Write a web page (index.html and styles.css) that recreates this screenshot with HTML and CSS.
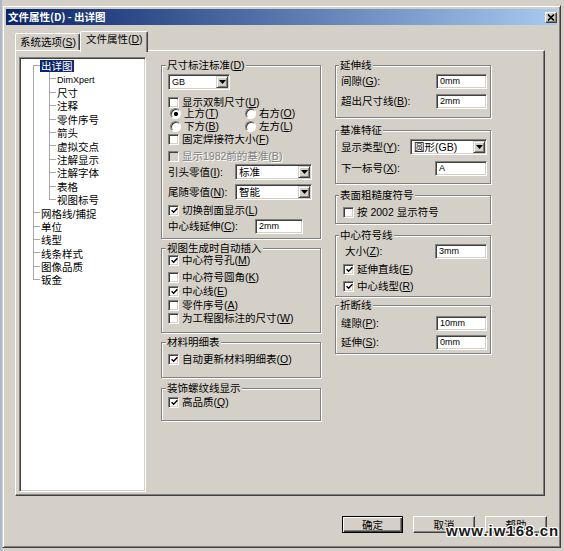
FILE: index.html
```html
<!DOCTYPE html>
<html lang="zh-CN">
<head>
<meta charset="utf-8">
<title>文件属性 - 出详图</title>
<link rel="stylesheet" href="styles.css">
</head>
<body>
<div class="screen">
 <div class="dialog">
  <div class="titlebar">
   <span class="title">文件属性(D) - 出详图</span>
   <span class="close"><svg width="8" height="7" viewBox="0 0 8 7"><path d="M1 0.5 L7 6.5 M7 0.5 L1 6.5" stroke="#000" stroke-width="1.7"/></svg></span>
  </div>
  <div class="body">
   <div class="tabs">
    <div class="tab">系统选项(<u>S</u>)</div>
    <div class="tab active">文件属性(<u>D</u>)</div>
   </div>
   <div class="panel">
    <div class="tree">
     <ul class="lvl0">
      <li><div class="node"><span class="lbl sel">出详图</span></div>
       <ul class="lvl1">
        <li><div class="node"><span class="lbl latin">DimXpert</span></div></li>
        <li><div class="node"><span class="lbl">尺寸</span></div></li>
        <li><div class="node"><span class="lbl">注释</span></div></li>
        <li><div class="node"><span class="lbl">零件序号</span></div></li>
        <li><div class="node"><span class="lbl">箭头</span></div></li>
        <li><div class="node"><span class="lbl">虚拟交点</span></div></li>
        <li><div class="node"><span class="lbl">注解显示</span></div></li>
        <li><div class="node"><span class="lbl">注解字体</span></div></li>
        <li><div class="node"><span class="lbl">表格</span></div></li>
        <li><div class="node"><span class="lbl">视图标号</span></div></li>
       </ul>
      </li>
      <li><div class="node"><span class="lbl">网格线/捕捉</span></div></li>
      <li><div class="node"><span class="lbl">单位</span></div></li>
      <li><div class="node"><span class="lbl">线型</span></div></li>
      <li><div class="node"><span class="lbl">线条样式</span></div></li>
      <li><div class="node"><span class="lbl">图像品质</span></div></li>
      <li><div class="node"><span class="lbl">钣金</span></div></li>
     </ul>
    </div>

    <div class="col mid">
     <fieldset class="grp g-dim">
      <legend>尺寸标注标准(<u>D</u>)</legend>
      <div class="rows">
       <div class="row"><span class="select w62"><span class="val latin">GB</span><span class="dd"><svg width="7" height="4" viewBox="0 0 7 4"><path d="M0 0H7L3.5 4Z"/></svg></span></span></div>
       <div class="row"><span class="cb"></span><span>显示双制尺寸(<u>U</u>)</span></div>
       <div class="row radios"><span class="ropt"><span class="rb on"></span>上方(<u>T</u>)</span><span class="ropt"><span class="rb"></span>右方(<u>O</u>)</span></div>
       <div class="row radios"><span class="ropt"><span class="rb"></span>下方(<u>B</u>)</span><span class="ropt"><span class="rb"></span>左方(<u>L</u>)</span></div>
       <div class="row"><span class="cb"></span><span>固定焊接符大小(<u>F</u>)</span></div>
       <div class="row"><span class="cb dis"></span><span class="dis-text">显示1982前的基准(<u>B</u>)</span></div>
       <div class="row"><span>引头零值(<u>I</u>):</span><span class="select w77 push m5"><span class="val">标准</span><span class="dd"><svg width="7" height="4" viewBox="0 0 7 4"><path d="M0 0H7L3.5 4Z"/></svg></span></span></div>
       <div class="row"><span>尾随零值(<u>N</u>):</span><span class="select w77 push m5"><span class="val">智能</span><span class="dd"><svg width="7" height="4" viewBox="0 0 7 4"><path d="M0 0H7L3.5 4Z"/></svg></span></span></div>
       <div class="row"><span class="cb on"><svg width="7" height="7" viewBox="0 0 7 7"><path d="M0.6 3.2 L2.6 5.2 L6.4 1.2" fill="none" stroke="#000" stroke-width="1.5"/></svg></span><span>切换剖面显示(<u>L</u>)</span></div>
       <div class="row"><span>中心线延伸(<u>C</u>):</span><span class="input w48 push m14">2mm</span></div>
      </div>
     </fieldset>

     <fieldset class="grp g-auto">
      <legend>视图生成时自动插入</legend>
      <div class="rows">
       <div class="row"><span class="cb on"><svg width="7" height="7" viewBox="0 0 7 7"><path d="M0.6 3.2 L2.6 5.2 L6.4 1.2" fill="none" stroke="#000" stroke-width="1.5"/></svg></span><span>中心符号孔(<u>M</u>)</span></div>
       <div class="row"><span class="cb"></span><span>中心符号圆角(<u>K</u>)</span></div>
       <div class="row"><span class="cb on"><svg width="7" height="7" viewBox="0 0 7 7"><path d="M0.6 3.2 L2.6 5.2 L6.4 1.2" fill="none" stroke="#000" stroke-width="1.5"/></svg></span><span>中心线(<u>E</u>)</span></div>
       <div class="row"><span class="cb"></span><span>零件序号(<u>A</u>)</span></div>
       <div class="row"><span class="cb"></span><span>为工程图标注的尺寸(<u>W</u>)</span></div>
      </div>
     </fieldset>

     <fieldset class="grp g-bom">
      <legend>材料明细表</legend>
      <div class="rows">
       <div class="row"><span class="cb on"><svg width="7" height="7" viewBox="0 0 7 7"><path d="M0.6 3.2 L2.6 5.2 L6.4 1.2" fill="none" stroke="#000" stroke-width="1.5"/></svg></span><span>自动更新材料明细表(<u>O</u>)</span></div>
      </div>
     </fieldset>

     <fieldset class="grp g-thread">
      <legend>装饰螺纹线显示</legend>
      <div class="rows">
       <div class="row"><span class="cb on"><svg width="7" height="7" viewBox="0 0 7 7"><path d="M0.6 3.2 L2.6 5.2 L6.4 1.2" fill="none" stroke="#000" stroke-width="1.5"/></svg></span><span>高品质(<u>Q</u>)</span></div>
      </div>
     </fieldset>
    </div>

    <div class="col right">
     <fieldset class="grp g-ext">
      <legend>延伸线</legend>
      <div class="rows">
       <div class="row"><span>间隙(<u>G</u>):</span><span class="input w51 push">0mm</span></div>
       <div class="row"><span>超出尺寸线(<u>B</u>):</span><span class="input w51 push">2mm</span></div>
      </div>
     </fieldset>

     <fieldset class="grp g-datum">
      <legend>基准特征</legend>
      <div class="rows">
       <div class="row"><span>显示类型(<u>Y</u>):</span><span class="select w77 push"><span class="val">圆形(GB)</span><span class="dd"><svg width="7" height="4" viewBox="0 0 7 4"><path d="M0 0H7L3.5 4Z"/></svg></span></span></div>
       <div class="row"><span>下一标号(<u>X</u>):</span><span class="input w52 push">A</span></div>
      </div>
     </fieldset>

     <fieldset class="grp g-rough">
      <legend>表面粗糙度符号</legend>
      <div class="rows">
       <div class="row ind2"><span class="cb"></span><span>按 2002 显示符号</span></div>
      </div>
     </fieldset>

     <fieldset class="grp g-center">
      <legend>中心符号线</legend>
      <div class="rows">
       <div class="row"><span class="ind4">大小(<u>Z</u>):</span><span class="input w52 push">3mm</span></div>
       <div class="row ind2"><span class="cb on"><svg width="7" height="7" viewBox="0 0 7 7"><path d="M0.6 3.2 L2.6 5.2 L6.4 1.2" fill="none" stroke="#000" stroke-width="1.5"/></svg></span><span>延伸直线(<u>E</u>)</span></div>
       <div class="row ind2"><span class="cb on"><svg width="7" height="7" viewBox="0 0 7 7"><path d="M0.6 3.2 L2.6 5.2 L6.4 1.2" fill="none" stroke="#000" stroke-width="1.5"/></svg></span><span>中心线型(<u>R</u>)</span></div>
      </div>
     </fieldset>

     <fieldset class="grp g-break">
      <legend>折断线</legend>
      <div class="rows">
       <div class="row"><span>缝隙(<u>P</u>):</span><span class="input w51 push">10mm</span></div>
       <div class="row"><span>延伸(<u>S</u>):</span><span class="input w51 push">0mm</span></div>
      </div>
     </fieldset>
    </div>
   </div>

   <div class="buttons">
    <span class="btn default">确定</span>
    <span class="btn">取消</span>
    <span class="btn">帮助</span>
   </div>
  </div>
 </div>
 <div class="watermark">www.iw168.cn</div>
</div>
</body>
</html>
```
FILE: styles.css
```css
* { box-sizing: border-box; }
html, body { margin: 0; padding: 0; }
body {
  font-family: "Liberation Sans", "Noto Sans CJK SC", sans-serif;
  font-size: 10.5px;
  color: #000;
  background: #d4d0c8;
}
u { text-underline-offset: 1px; }

.screen {
  position: relative;
  width: 564px;
  height: 551px;
  overflow: hidden;
  padding: 5px 0 0 2px;
  background: linear-gradient(to right, #aeb7c8 0, #aeb7c8 2px, #d4d0c8 2px);
}

.dialog {
  width: 559px;
  height: 543px;
  background: #d4d0c8;
  border: 1px solid;
  border-color: #d4d0c8 #404040 #404040 #d4d0c8;
  box-shadow: inset 1px 1px 0 #fff, inset -1px -1px 0 #808080;
  padding: 3px;
}

.titlebar {
  height: 16px;
  display: flex;
  align-items: center;
  justify-content: space-between;
  background: linear-gradient(to right, #0a246a 0%, #a6caf0 100%);
  padding-left: 2px;
}
.title {
  color: #fff;
  font-weight: bold;
  line-height: 14px;
  font-family: "Noto Sans CJK SC", sans-serif;
}
.close {
  width: 12px;
  height: 11px;
  background: #d4d0c8;
  border: 1px solid;
  border-color: #fff #404040 #404040 #fff;
  box-shadow: inset -1px -1px 0 #808080;
  display: flex;
  align-items: center;
  justify-content: center;
}

.body { padding: 6px 12px 0 9px; }

.tabs {
  display: flex;
  align-items: flex-end;
  height: 19px;
}
.tab {
  width: 65px;
  height: 17px;
  padding: 2px 0 0 4px;
  line-height: 13px;
  border: 1px solid;
  border-bottom: none;
  border-color: #fff #404040 transparent #fff;
  box-shadow: inset -1px 0 0 #808080;
  border-radius: 2px 2px 0 0;
  white-space: nowrap;
}
.tab.active {
  width: 68px;
  height: 21px;
  margin-bottom: -2px;
  padding: 1px 0 0 5px;
  position: relative;
  z-index: 1;
  background: #d4d0c8;
}

.panel {
  display: flex;
  align-items: flex-start;
  width: 530px;
  height: 446px;
  border: 1px solid;
  border-color: #fff #404040 #404040 #fff;
  box-shadow: inset -1px -1px 0 #808080;
  padding: 6px 0 0 3px;
}

/* tree */
.tree {
  width: 127px;
  height: 435px;
  flex: none;
  background: #fff;
  border: 1px solid;
  border-color: #808080 #fff #fff #808080;
  box-shadow: inset 1px 1px 0 #404040, inset -1px -1px 0 #d4d0c8;
  padding: 1px 0 0 1px;
}
.tree ul { list-style: none; margin: 0; padding: 0; }
.lvl0 { padding-left: 20px !important; }
.lvl1 { padding-left: 16px !important; }
.tree li { position: relative; }
.tree li::before {
  content: "";
  position: absolute;
  left: -8px;
  top: 6px;
  width: 7px;
  border-top: 1px solid #a8a8a8;
}
.tree li::after {
  content: "";
  position: absolute;
  left: -8px;
  top: 0;
  bottom: 0;
  border-left: 1px solid #a8a8a8;
}
.lvl0 > li:first-child::after { top: 6px; }
.tree li:last-child::after { bottom: auto; height: 7px; }
.node {
  height: 13.4px;
  line-height: 13.4px;
  white-space: nowrap;
}
.lbl { display: inline-block; line-height: 12px; vertical-align: middle; }
.lbl.sel {
  background: #0a246a;
  color: #fff;
  padding: 0 1px;
  margin-left: -1px;
}
.latin { font-size: 9px; }

/* columns */
.col { flex: none; margin-top: 2px; }
.mid { width: 160px; margin-left: 15px; }
.right { width: 156px; margin-left: 14px; }

.grp {
  display: block;
  margin: 0;
  min-width: 0;
  padding: 0 3px 0 6px;
  border: 1px solid #808080;
  box-shadow: inset 1px 1px 0 #fff, 1px 1px 0 #fff;
}
.grp legend {
  padding: 0 1px;
  margin-left: -2px;
  height: 12px;
  line-height: 12px;
  background: #d4d0c8;
  white-space: nowrap;
}
.right .grp { padding-left: 5px; }

.g-dim { height: 180px; }
.g-auto { height: 91px; margin-top: 3px; }
.g-bom { height: 42px; margin-top: 3px; }
.g-thread { height: 39px; margin-top: 4px; }
.g-ext { height: 59px; }
.g-datum { height: 60px; margin-top: 6px; }
.g-rough { height: 35px; margin-top: 5px; }
.g-center { height: 68px; margin-top: 5px; }
.g-break { height: 55px; margin-top: 2px; }

.rows { display: grid; grid-template-rows: 16px; }
.g-dim .rows { padding-top: 3px; grid-template-rows: 20px 11px 13px 13px 17px 16px 20px 18px 16px 16px; }
.g-auto .rows { margin-top: -2px; grid-template-rows: 17px 14px 14px 13px 16px; }
.g-bom .rows { padding-top: 3px; }
.g-ext .rows { padding-top: 2px; grid-template-rows: 20px 16px; }
.g-datum .rows { padding-top: 3px; grid-template-rows: 21px 16px; }
.g-rough .rows { padding-top: 3px; }
.g-center .rows { padding-top: 2px; grid-template-rows: 18px 17px 16px; }
.g-break .rows { padding-top: 4px; grid-template-rows: 19px 16px; }

.row {
  height: 16px;
  display: flex;
  align-items: center;
  line-height: 12px;
  white-space: nowrap;
}
.row.radios {
  display: grid;
  grid-template-columns: 75px auto;
  align-items: center;
  padding-left: 2px;
}
.ropt { display: flex; align-items: center; }
.ind2 { padding-left: 2px; }
.ind4 { padding-left: 4px; }
.push { margin-left: auto; }
.m5 { margin-right: 5px; }
.m14 { margin-right: 14px; }

/* controls */
.cb {
  width: 11px;
  height: 11px;
  flex: none;
  margin-right: 3px;
  background: #fff;
  border: 1px solid;
  border-color: #808080 #fff #fff #808080;
  box-shadow: inset 1px 1px 0 #404040, inset -1px -1px 0 #d4d0c8;
  display: flex;
  align-items: center;
  justify-content: center;
}
.cb svg { margin: 1px 0 0 1px; }
.cb.dis { background: #d4d0c8; }
.dis-text { color: #808080; text-shadow: 1px 1px 0 #fff; }

.rb {
  width: 11px;
  height: 11px;
  flex: none;
  margin-right: 3px;
  border-radius: 50%;
  background: #fff;
  border: 1px solid;
  border-color: #808080 #fff #fff #808080;
  box-shadow: inset 1px 1px 0 #404040;
}
.rb.on { background: radial-gradient(circle at 55% 55%, #000 0, #000 1.8px, #fff 2.4px); }

.select {
  display: flex;
  height: 16px;
  flex: none;
  background: #fff;
  border: 1px solid;
  border-color: #808080 #fff #fff #808080;
  box-shadow: inset 1px 1px 0 #404040, inset -1px -1px 0 #d4d0c8;
  padding: 1px;
}
.select .val { flex: 1; padding-left: 2px; line-height: 12px; overflow: hidden; }
.select .dd {
  width: 12px;
  height: 12px;
  flex: none;
  background: #d4d0c8;
  border: 1px solid;
  border-color: #d4d0c8 #404040 #404040 #d4d0c8;
  box-shadow: inset 1px 1px 0 #fff, inset -1px -1px 0 #808080;
  display: flex;
  align-items: center;
  justify-content: center;
}
.w62 { width: 62px; }
.w77 { width: 77px; }

.input {
  height: 15px;
  flex: none;
  background: #fff;
  border: 1px solid;
  border-color: #808080 #fff #fff #808080;
  box-shadow: inset 1px 1px 0 #404040, inset -1px -1px 0 #d4d0c8;
  padding-left: 3px;
  font-size: 9px;
  line-height: 13px;
}
.w48 { width: 48px; }
.w51 { width: 51px; }
.w52 { width: 52px; }

/* buttons */
.buttons {
  display: flex;
  justify-content: flex-end;
  gap: 10px;
  margin: 20px -2px 0 0;
}
.btn {
  width: 62px;
  height: 17px;
  display: flex;
  align-items: center;
  justify-content: center;
  line-height: 12px;
  border: 1px solid;
  border-color: #fff #404040 #404040 #fff;
  box-shadow: inset -1px -1px 0 #808080;
}
.btn.default {
  width: 61px;
  border-color: #000;
  box-shadow: inset 1px 1px 0 #fff, inset -1px -1px 0 #404040, inset -2px -2px 0 #808080;
}

.watermark {
  position: absolute;
  left: 446px;
  top: 522px;
  font-family: "Liberation Sans", sans-serif;
  font-weight: bold;
  font-size: 15px;
  letter-spacing: 1px;
  color: #1a1a1a;
  text-shadow: 1px 1px 0 #fff, -1px -1px 0 #fff, 1px -1px 0 #fff, -1px 1px 0 #fff;
  white-space: nowrap;
}
```
